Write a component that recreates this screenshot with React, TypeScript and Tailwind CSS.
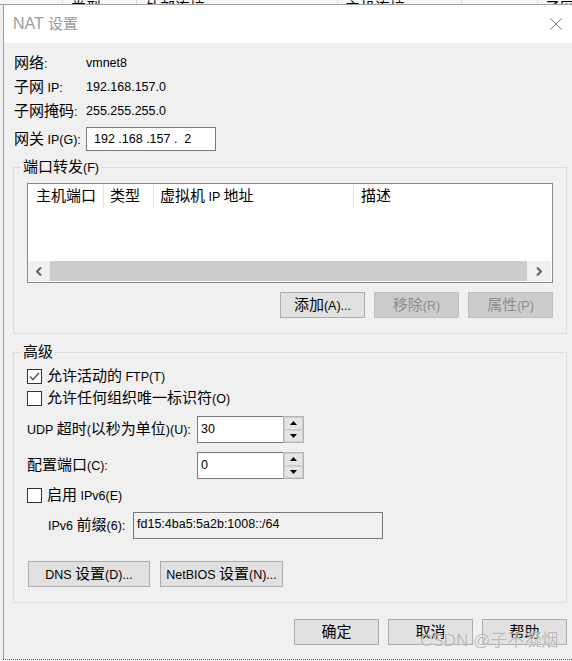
import { Fragment, type ReactNode } from "react";

const CJK = /([\u3000-\u303f\u4e00-\u9fff\uff00-\uffef]+)/;

// Chinese runs render a bit larger than Latin runs, like the Windows dialog font
function T({ s }: { s: string }) {
  return (
    <span className="whitespace-pre">
      {s.split(CJK).map((part, i) =>
        i % 2 === 1 ? (
          <span key={i} className="text-[15px]">
            {part}
          </span>
        ) : (
          <Fragment key={i}>{part}</Fragment>
        )
      )}
    </span>
  );
}

function Button({ label, className = "", disabled = false }: { label: string; className?: string; disabled?: boolean }) {
  return (
    <div
      className={`flex h-[26px] items-center justify-center border ${
        disabled ? "border-[#bfbfbf] bg-[#cccccc] text-[#8d8d8d]" : "border-[#adadad] bg-[#e1e1e1] text-black"
      } ${className}`}
    >
      <T s={label} />
    </div>
  );
}

function Group({ title, className = "", children }: { title: string; className?: string; children: ReactNode }) {
  return (
    <div className={`relative border border-[#dcdcdc] ${className}`}>
      <div className="absolute left-[7px] top-[-10px] bg-[#f0f0f0] px-[2px] leading-[17px]">
        <T s={title} />
      </div>
      {children}
    </div>
  );
}

function Checkbox({ label, checked = false }: { label: string; checked?: boolean }) {
  return (
    <div className="flex h-[22px] items-center">
      <div className="flex h-[15px] w-[15px] items-center justify-center border border-[#333333] bg-white">
        {checked && (
          <svg width="11" height="9" viewBox="0 0 11 9">
            <polyline points="1,4.5 4,7.5 10,1" fill="none" stroke="#555555" strokeWidth="1.5" />
          </svg>
        )}
      </div>
      <div className="ml-[5px]">
        <T s={label} />
      </div>
    </div>
  );
}

function Arrow({ up }: { up?: boolean }) {
  return (
    <div className="flex flex-1 items-center justify-center border border-[#cfcfcf] bg-[#e5e5e5]">
      <svg width="7" height="4" viewBox="0 0 7 4">
        <path d={up ? "M3.5 0L7 4H0z" : "M0 0h7L3.5 4z"} fill="#000" />
      </svg>
    </div>
  );
}

function SpinBox({ value }: { value: string }) {
  return (
    <div className="flex h-[27px]">
      <div className="w-[86px] border border-r-0 border-[#7a7a7a] bg-white pl-[3px] pt-[3px]">{value}</div>
      <div className="flex w-[21px] flex-col border border-[#b4b4b4] bg-[#f0f0f0]">
        <Arrow up />
        <Arrow />
      </div>
    </div>
  );
}

function Chevron({ right }: { right?: boolean }) {
  return (
    <svg width="6" height="9" viewBox="0 0 6 9">
      <path d={right ? "M1 0.5L5 4.5L1 8.5" : "M5 0.5L1 4.5L5 8.5"} fill="none" stroke="#606060" strokeWidth="2" />
    </svg>
  );
}

export default function App() {
  return (
    <div className="relative flex h-[661px] w-[572px] flex-col overflow-hidden bg-white font-['Liberation_Sans','Noto_Sans_CJK_SC',sans-serif] text-[12.5px] text-black">
      {/* header of the parent window peeking out above */}
      <div className="flex h-[5px] shrink-0 overflow-hidden border-b border-[#a0a0a0] bg-[#f7f7f7] leading-[15px]">
        <div className="w-[63px] shrink-0 border-r border-[#d9d9d9]" />
        <div className="w-[74px] shrink-0 border-r border-[#d9d9d9] pl-[8px]">
          <T s="类型" />
        </div>
        <div className="w-[201px] shrink-0 border-r border-[#d9d9d9] pl-[8px]">
          <T s="外部连接" />
        </div>
        <div className="w-[124px] shrink-0 border-r border-[#d9d9d9] pl-[7px]">
          <T s="主机连接" />
        </div>
        <div className="w-[76px] shrink-0 border-r border-[#d9d9d9]" />
        <div className="pl-[7px]">
          <T s="子网" />
        </div>
      </div>

      <div className="flex h-[655px] shrink-0">
        <div className="w-[3px] shrink-0 bg-[#f0f0f0]" />
        <div className="flex flex-1 flex-col">
          <div className="flex h-[654px] flex-col border-l border-[#9a9a9a]">
            {/* title bar */}
            <div className="flex h-[38px] shrink-0 items-center bg-white pl-[9px] pr-[10px]">
              <div className="text-[16px] text-[#9b9b9b]">
                NAT <span className="text-[15px]">设置</span>
              </div>
              <svg className="ml-auto" width="12" height="12" viewBox="0 0 12 12">
                <path d="M0.5 0.5L11.5 11.5M11.5 0.5L0.5 11.5" stroke="#7a7a7a" strokeWidth="1" />
              </svg>
            </div>

            <div className="flex flex-1 flex-col bg-[#f0f0f0] pl-[9px] pt-[8px]">
              {[
                ["网络:", "vmnet8"],
                ["子网 IP:", "192.168.157.0"],
                ["子网掩码:", "255.255.255.0"],
              ].map(([k, v]) => (
                <div key={k} className="flex h-[24px] items-center pl-px">
                  <div className="w-[72px]">
                    <T s={k} />
                  </div>
                  <div>{v}</div>
                </div>
              ))}
              <div className="mt-[4px] flex h-[24px] items-center pl-px">
                <div className="w-[72px]">
                  <T s="网关 IP(G):" />
                </div>
                <div className="flex h-[24px] w-[130px] items-center whitespace-pre border border-[#7a7a7a] bg-white pl-[7px]">
                  {"192 .168 .157 .  2"}
                </div>
              </div>

              <Group title="端口转发(F)" className="mt-[16px] h-[167px] w-[554px] px-[13px] pt-[15px]">
                <div className="flex h-[100px] w-[526px] flex-col border border-[#828790] bg-white">
                  <div className="flex h-[25px] items-center">
                    <div className="flex h-full w-[76px] items-center border-r border-[#e5e5e5] pl-[8px]">
                      <T s="主机端口" />
                    </div>
                    <div className="flex h-full w-[50px] items-center border-r border-[#e5e5e5] pl-[6px]">
                      <T s="类型" />
                    </div>
                    <div className="flex h-full w-[200px] items-center border-r border-[#e5e5e5] pl-[6px]">
                      <T s="虚拟机 IP 地址" />
                    </div>
                    <div className="flex h-full items-center pl-[7px]">
                      <T s="描述" />
                    </div>
                  </div>
                  <div className="flex-1" />
                  <div className="mb-px mr-px flex h-[20px]">
                    <div className="flex w-[22px] items-center justify-center bg-[#f0f0f0]">
                      <Chevron />
                    </div>
                    <div className="flex-1 bg-[#cdcdcd]" />
                    <div className="flex w-[24px] items-center justify-center bg-[#f0f0f0]">
                      <Chevron right />
                    </div>
                  </div>
                </div>
                <div className="mt-[9px] flex justify-end gap-[9px]">
                  <Button label="添加(A)..." className="w-[85px]" />
                  <Button label="移除(R)" className="w-[85px]" disabled />
                  <Button label="属性(P)" className="w-[85px]" disabled />
                </div>
              </Group>

              <Group title="高级" className="mt-[18px] h-[251px] w-[554px] px-[13px] pt-[12px]">
                <Checkbox label="允许活动的 FTP(T)" checked />
                <Checkbox label="允许任何组织唯一标识符(O)" />
                <div className="mt-[7px] flex h-[27px] items-center">
                  <div className="w-[170px]">
                    <T s="UDP 超时(以秒为单位)(U):" />
                  </div>
                  <SpinBox value="30" />
                </div>
                <div className="mt-[9px] flex h-[27px] items-center">
                  <div className="w-[170px]">
                    <T s="配置端口(C):" />
                  </div>
                  <SpinBox value="0" />
                </div>
                <div className="mt-[5px]">
                  <Checkbox label="启用 IPv6(E)" />
                </div>
                <div className="mt-[6px] flex h-[27px] items-center pl-[21px]">
                  <div className="w-[85px]">
                    <T s="IPv6 前缀(6):" />
                  </div>
                  <div className="flex h-[27px] w-[250px] items-center border border-[#7a7a7a] bg-[#f0f0f0] pb-[2px] pl-[3px]">
                    fd15:4ba5:5a2b:1008::/64
                  </div>
                </div>
                <div className="mt-[22px] flex gap-[10px] pl-px">
                  <Button label="DNS 设置(D)..." className="w-[122px]" />
                  <Button label="NetBIOS 设置(N)..." className="w-[123px]" />
                </div>
              </Group>

              <div className="mt-[16px] flex w-[554px] justify-end gap-[9px]">
                <Button label="确定" className="w-[85px]" />
                <Button label="取消" className="w-[85px]" />
                <Button label="帮助" className="w-[85px]" />
              </div>
            </div>
          </div>
          <div className="h-px border-t border-dotted border-[#555555]" />
        </div>
      </div>

      {/* blog watermark */}
      <div className="absolute left-[420px] top-[631px] text-[17px] leading-[20px] text-[#b5b5b5] opacity-90 [text-shadow:0_0_2px_#ffffff]">
        CSDN @子不凝烟
      </div>
    </div>
  );
}
